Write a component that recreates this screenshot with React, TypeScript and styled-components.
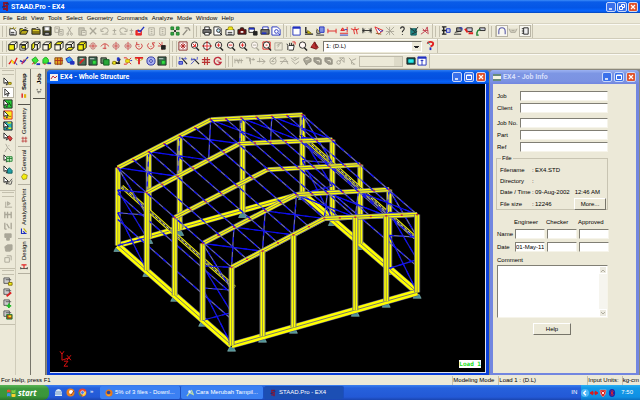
import React from 'react';
import styled, { createGlobalStyle, css } from 'styled-components';

const beige = '#ece9d8';
const shade = '#aca899';

const Global = createGlobalStyle`
  * { box-sizing: border-box; }
  html, body { margin: 0; padding: 0; }
  body, button, input, select, textarea {
    font-family: "Liberation Sans", Arial, sans-serif;
    font-size: 6px;
    line-height: 9px;
    color: #000;
  }
  button, input, select, textarea { margin: 0; padding: 0; border-radius: 0; }
`;

/* ---------- icons ---------- */

type Part = [d: string, stroke: string, fill?: string, width?: number];

const K = '#222';
const G = '#aaa798';
const R = '#e02020';
const Y = '#f4ee10';
const B = '#2030c0';
const T = '#208030';

const front = 'M1 4h6v6h-6z';
const top = 'M1 4l3-3h6l-3 3z';
const side = 'M7 4l3-3v6l-3 3z';
const cube = (...faces: string[]): Part[] => [
  [front + top + side, K, '#fbf8e8'],
  ...faces.map((f): Part => [f, K, Y]),
];
const zoomGlass = (inner: string, c = R, ring = K): Part[] => [
  ['M1.5 4.5a3.5 3.5 0 1 0 7 0a3.5 3.5 0 1 0 -7 0z', ring, '#fff8f4'],
  ['M7 7.5l3 3', ring, '', 1.5],
  [inner, c],
];
const plus = 'M3 4.5h4M5 2.5v4';
const arrow = 'M2 1v7l2-2l1 3l1-1l-1-2h2z';
const pointer = (extra: Part[]): Part[] => [['M1 1v6l2-1l1 3l1-1l-1-2h2z', K, '#fff'], ...extra];
const greyNode = (d: string): Part[] => [[d, G]];

const icons: Record<string, Part[]> = {
  c1: cube(front),
  c2: [...cube(), ['M3 5h4v3h-4z', K, Y]],
  c3: [...cube(), ['M1 4l3-3v6l-3 3z', K, Y]],
  c4: cube(side),
  c5: cube(top),
  c6: [...cube(), ['M1 10l3-3h6l-3 3z', K, Y]],
  c7: cube(front, top, side),
  newFile: [['M2 3h4l3 3v4h-7z', K, '#fff'], ['M2 2l2 1M6 1v2M9 2l-2 1', '#a09010'], ['M3 7h4M3 9h4', K]],
  open: [['M1 9v-6h3l1 1h3v2', K, Y], ['M1 9l2-4h7l-2 4z', K, '#b8a818'], ['M6 2q2-1 3 1', K]],
  folder: [['M1 9v-6h4l1 1h4v5z', K, '#8a7a14'], ['M2 5h7', '#e8d830'], ['M6 2q2-1 3 1', K]],
  save: [['M1 1h9v9h-9z', K, '#4a4a20'], ['M3 1h5v4h-5z', '#888', '#fff'], ['M3 7h5v3h-5z', K, '#aaa']],
  copy: [['M1 1h5v6h-5zM5 4h5v6h-5z', G], ['M2 3h3M6 6h3M6 8h3', G]],
  cut: [['M3 1l4 7M7 1l-4 7M3 8a1 1 0 1 0 .1 0M7 8a1 1 0 1 0 .1 0', G]],
  paste: [['M2 2h6v8h-6z', G, '#c8c5b4'], ['M5 5h5v5h-5z', G, beige], ['M6 7h3', G]],
  del: [['M2 2l7 7M9 2l-7 7', G, '', 1.5]],
  undo: [['M2 5a3.5 3 0 0 1 7 0q0 3-3 3M1 3v3h3M2 9h7', G]],
  redo: [['M9 5a3.5 3 0 0 0-7 0q0 3 3 3M10 3v3h-3M2 9h7', G]],
  more: [['M4 5h4M6 3v5M4 9h4', G]],
  check: [['M1 5h6v5h-6z', R, '#f03030'], ['M3 4l2 3l5-6', B, '', 1.5], ['M3 7h3', '#fff']],
  pageGrey: [['M2 2h6v8h-6z', G], ['M4 4h2M4 6h2M4 8h2', G]],
  tiles: [['M1 1h3v3h-3zM7 1h3v3h-3zM1 7h3v3h-3zM7 7h3v3h-3z', T, '#30a840'], ['M4 4l3 3M7 4l-3 3', K]],
  hammer: [['M2 10l5-6M4 2h4l2 3', '#8f8c80', '', 1.5]],
  print: [['M3 4v-3h5v3', K, '#fff'], ['M1 4h9v4h-9z', K, '#777'], ['M3 7h5v3h-5z', K, '#fff']],
  preview: [['M1 1h6l2 2v7h-8z', K, '#fff'], ['M4 5a2 2 0 1 0 4 0a2 2 0 1 0-4 0M7 7l3 3', K, '#b8dff0']],
  report: [['M1 4h9v6h-9z', K, '#fff'], ['M3 4l1-3h4l1 3', '#a09010', Y], ['M3 7h5M3 9h5', K]],
  camera: [['M1 4h2l1-2h3l1 2h2v5h-9z', K, '#6a1010'], ['M4 6.5h3', '#eee', '', 2]],
  movie: [['M1 2h6v5h-6z', K, '#fff'], ['M1 3h6', B, '', 2], ['M6 6h4v4h-4z', K, K]],
  printBlue: [['M3 4v-3h6v3', B, '#fff'], ['M1 4h9v5h-9z', K, '#777'], ['M2 8h5', B, '', 2]],
  pageBlue: [['M1 1h6l3 3v6h-9z', B, '#fff'], ['M4 6a2 2 0 1 0 4 0a2 2 0 1 0-4 0M8 8l2 2', B]],
  win: [['M1 1h8v9h-8z', B, '#fff'], ['M1 2h8', B, '', 2]],
  lab: [['M2 1v6h4M1 9h9', K, '', 1.5], ['M4 5l4 3h-4z', '#807010', Y]],
  labBlue: [['M2 4v4h4M1 10h9', K], ['M5 1h5v6h-5z', B, '#8090e0'], ['M2 3l3 4', '#807010', Y]],
  dimRed: [['M1 3v5M10 3v5M1 5.5h9', R]],
  loadRed: [['M1 8h9M4 2l2 3h-4zM9 1v6', R, '#f06060'], ['M1 10h9M6 4h3', B]],
  fork: [['M1 3l3 1l1 5M10 3l-3 1l1 5M4 4h4M5.5 4v-3', R]],
  dim: [['M1 2v6M10 2v6M1 5h9M3 3l-2 2l2 2M8 3l2 2l-2 2', K]],
  tagRed: [['M1 1l4 8l5-4z', R, '#fff'], ['M4 3l3 3l3-1', B], ['M2 8l6 1', '#806020']],
  crossGrey: [['M1 1l9 9M10 1l-9 9M1 6h9M5 1v9', G]],
  ask: [['M4 3q0-2 2-2t2 2q0 1-2 3v1M6 9v1', K, '', 1.2]],
  brush: [['M2 3h6v7h-6z', '#106060', '#208888'], ['M1 2l5 4l4-5M3 9l6-3', K]],
  aRed: [['M1 9q5-2 7-8l1 8M3 5h6M3 3l5 5', '#c04050']],
  beam1: [['M1 1h5M1 9h5M3 1v8M1 5h9', K, '', 1.5], ['M6 3h4v4h-4z', B, '#ccd']],
  beam2: [['M4 2h5v4h-5zM1 9h8M2 7l5-1', K, '#999'], ['M7 2h3v3', B]],
  beam3: [['M3 2h6v4h-6z', K, '#ccd'], ['M1 3l3 4M5 8h5', R, '', 2]],
  beam4: [['M4 2h6v3h-6z', K, '#ccd'], ['M1 9q0-5 4-5M1 7v3h2', T, '', 1.5]],
  arch: [['M2 9v-3q0-4 3.5-4t3.5 4v3', '#5a5aa8', '', 1.2]],
  cup: [['M1 3l2 4h5l2-4M4 5h3', G, '#d4d1c0']],
  frame: [['M4 2h5v7h-5z', K, '#eee'], ['M2 3h2M2 5.5h2M2 8h2', K]],
  rotH: [['M1 5.5h9M5.5 3v5', '#d04040'], ['M3 5a2.5 3 0 0 1 5 0M3 6a2.5 3 0 0 0 5 0', '#c07070']],
  rotH2: [['M1 6q4-6 9 0M3 8h4M5.5 3v6', '#d04040']],
  rotV: [['M5.5 1v9M3 5.5h5', '#d04040'], ['M5 3a3 2.5 0 0 0 0 5M6 3a3 2.5 0 0 1 0 5', '#c07070']],
  rotL: [['M3 3a3.5 3.5 0 1 0 5 0M3 1v3h3M5 6h1', '#d04040']],
  rotR: [['M8 3a3.5 3.5 0 1 1-5-.5M8 5l-1-3h3M5 6h1', '#d04040']],
  target: [['M5.5 1v9M1 5.5h9M2 2l7 7', '#d04040'], ['M5 5h4v4h-4z', K, K]],
  fit: [['M1 1h9v9h-9z', '#802020', '#fff'], ['M3 3l5 5M8 3l-5 5M5.5 2v7M2 5.5h7', '#b02020']],
  zoomPlus: zoomGlass(plus),
  zoomMinus: zoomGlass('M3 4.5h4'),
  zoomArrow: zoomGlass('M3 3l3 3M6 3v3h-3'),
  zoomCross: [['M1.5 5.5a4 4 0 1 0 8 0a4 4 0 1 0-8 0z', K, '#fff'], ['M0 5.5h11M5.5 0v11', R]],
  zoomBox: [['M1 1h8v8h-8z', R], ...zoomGlass('M4 4.5h2')],
  zoomGrey: zoomGlass('M3 4.5h4', G, G),
  boxGrey: [['M1 2h8v8h-8z', G], ['M3 5l5-3M4 7l2-3', G]],
  hand: [['M2 10v-5l-1-2M4 5v-3M6 5v-3M8 5v-2M3 10h5l1-5h-6', K, '#fff'], ['M7 1h3v3', R]],
  glass: zoomGlass('M4 3h1', '#fff'),
  pyramid: [['M1 7l4-6l2 6z', '#701818', '#d8a0a0'], ['M5 1l4 6l-2 2l-6-2M5 1l2 6', '#701818', '#b83030']],
  helpRed: [['M3 3q0-2 3-2t3 2q0 2-3 3', R, '', 2], ['M6 7v3', B, '', 2], ['M3 1l2 3', '#20a0a0']],
  nodeRed: [['M1 9l3-4l3 3l3-6', R, '', 1.5], ['M4 5l2 3', Y, '', 2], ['M8 7l2 3', B]],
  nodeBlue: [['M1 5l4 2l5-6', B, '', 1.5], ['M3 9l3-5', '#c83060', '', 1.5], ['M7 3l2 2', Y]],
  plateG: [['M1 4l4-3l3 4l-4 4z', '#20a020', '#38e838'], ['M1 9l3-2', R], ['M6 9h4', B, '', 2]],
  plateG2: [['M1 4q3-5 6 0v4h-6z', '#20a020', '#38e838'], ['M6 8h4', B, '', 2], ['M2 9h2', R]],
  mesh: [['M1 2h8v7h-8z', '#804010', '#e8b020'], ['M1 5h9M4 2v8M7 2v8', '#b03020']],
  solid: [['M1 3l4-2l3 3v4l-5-1z', B, '#30a0e8'], ['M6 6h4v3h-4z', B, B]],
  boxR: [['M1 1h9v9h-9z', K, '#467058'], ['M3 8l5-5', R, '', 2], ['M3 3h4', '#ddd']],
  boxG: [['M1 1h9v9h-9z', K, '#38664c'], ['M5 5h4v4h-4z', T, '#30e040'], ['M2 3h5', '#ddd']],
  boxG2: [['M1 2h6v6h-6z', K, '#6a8a6a'], ['M4 4h6v6h-6z', '#106020', '#28a838']],
  spread: [['M1 8h9M3 6l5 2l2-5', K, '', 1.5], ['M2 6h3v3h-3z', '#a09010', Y], ['M7 2h2v3h-2z', B, B]],
  fan: [['M1 2h3l2 3l3-3M1 9h3l2-3l3 3', R], ['M3 4h4v3h-4z', '#c0a010', Y], ['M8 5h2', B]],
  tee: [['M1 2h9M5.5 2v7', R, '', 2], ['M1 3l3 2M10 3l-3 2', '#c0a010']],
  wheel: [['M1 5.5a4.5 4.5 0 1 0 9 0a4.5 4.5 0 1 0-9 0', '#2830a0', '#a8b0f0'], ['M4 5.5a1.5 1.5 0 1 0 3 0a1.5 1.5 0 1 0-3 0', '#2830a0', '#fff']],
  wandBox: [['M4 2l6 7', K, '', 1.2], ['M1 6h4v3h-4z', B, '#8088e0'], ['M2 1v3M8 1v3M5 3h5', '#6068d0']],
  wand: [['M4 3l6 6', K, '', 1.2], ['M1 9l4-4M2 2v3M8 1v3M1 4h6', '#4850c8']],
  hash: [['M1 4h9M1 7h9M4 1v9M7 1v9', '#b83030', '', 1.2]],
  ring: [['M9 4a4 4 0 1 0 0 3h-3', '#c03040', '', 1.5], ['M4 5.5h3', '#c03040']],
  g1: greyNode('M1 3v5M3 3l2 5l1-5M8 3v5M1 5h9'),
  g2: greyNode('M1 2h4v4M6 2v7M9 2v3M7 4h4'),
  g3: greyNode('M1 6h9M6 3l4 3l-3 3M4 2v5'),
  g4: greyNode('M2 5.5a3.5 3.5 0 1 0 7 0a3.5 3.5 0 1 0-7 0M4 6l5-5M4 6h3'),
  g5: greyNode('M1 2h6M2 9l5-6l3 6M1 6h9'),
  g6: greyNode('M1 2l4 3l5-3M2 5l4 4l4-3M4 2h3'),
  blob: [['M2 3l4-2l4 2v3l-4 2l-1 2l-3-5z', '#8e8b7e', '#aaa798'], ['M4 4l4-1', beige]],
  blob2: [['M1 2h6l2 2v5h-4l-4-3z', '#8e8b7e', '#a09d90'], ['M4 5h3v2', beige]],
  g9: greyNode('M2 7a2 2 0 1 0 4 0a2 2 0 1 0-4 0M5 6l4-4M5 2h5v5z'),
  g10: greyNode('M2 2l3 3l5-2M4 5l4 4M6 9h3M5 6v3'),
  screen: [['M1 2h9v7h-9z', K, '#105050'], ['M3 4h5v3h-5z', '#20d0d0', '#30f0f0']],
  pageUp: [['M1 1h9v9h-9z', B, '#fff'], ['M1 2h9', B, '', 2], ['M5.5 4v6M4 5h3', B]],
  ptrNode: pointer([['M6 6h3v2h-3z', '#807010', Y]]),
  ptr: [[arrow, K, '#fff']],
  ptrG: [['M1 1h9v9h-9z', K, '#28d038'], ...pointer([['M6 3l3 5', '#104010']])],
  ptrY: [['M1 1h9v9h-9z', R, '#f8f020'], ...pointer([['M6 7h3', '#a06010']])],
  ptrB: [['M1 1h9v9h-9z', K, '#28b0b8'], ...pointer([['M5 2h4M6 8h3', Y, '', 1.5]])],
  ptrR: pointer([['M5 6l2-2l3 3l-2 3z', '#801818', '#e04040']]),
  ptrGrey: greyNode('M3 1l2 4l-3 5M5 5l4 4M6 3h1'),
  ptrT: pointer([['M4 3h6v5h-6z', T, '#c8f0c8'], ['M7 3v6M4 5h6', T]]),
  ptrC: pointer([['M5 5l2-2l3 3v3h-5z', '#106060', '#20a0a8']]),
  ptrPen: pointer([['M5 9l5-6M6 9h3l1-4', '#555']]),
  v1: [['M2 9h8M3 3v6M5 3l3 2l-3 2z', G, '#c4c1b0']],
  v2: [['M2 2v7M9 2v7M2 5h7M5 2v7', G, '', 1.5]],
  v3: [['M2 2v7M9 2v7M4 3l3 5M2 9h2', G, '', 1.5]],
  v4: [['M2 2h7v4h-2v3h-3v-3h-2z', G, G]],
  v5: [['M2 4l3-2h5v5l-2 2h-5z', G, G]],
  v6: [['M2 4h5v5h-5zM4 2h5v5', G]],
  sY: [['M1 1h6v6h-6zM3 3h6', '#555', '#ccc'], ['M6 6h4v3h-4z', '#807010', Y]],
  sR: [['M1 1h6v6h-6zM3 3h6', '#555', '#ccc'], ['M4 9l5-4', R, '', 2]],
  sG: [['M1 1h6v6h-6zM3 3h6', '#555', '#ccc'], ['M4 7.5h5M6.5 5v5', '#20b828', '', 2]],
  sM: [['M1 1h6v6h-6zM3 3h6', '#555', '#ccc'], ['M4 5h6v5h-6z', T, '#b04020'], ['M6 7h3', Y, '', 2]],
  tabSetup: [['M3 2v6', R, '', 2], ['M7 3v5', '#e0b010', '', 3]],
  tabGeo: [['M2 3h8M2 7h8M4 1v8M8 1v8', '#b83030']],
  tabGen: [['M2 5l3-4l5 2l-1 5l-5 1z', '#908010', Y]],
  tabAna: [['M2 2v7h7M4 6l3 2', B, '', 1.5], ['M5 2l4 5', '#c0b010', '', 1.5]],
  tabDes: [['M2 4h7M5.5 4v5', R, '', 1.5], ['M1 7v3M10 7v3M1 9h9', K]],
  tabJob: [['M3 8h5M5 9v1M3 4v2M8 4v2', K]],
};

const IconSvg = styled.svg`
  display: block;
  width: 10px;
  height: 10px;
  flex: none;
`;

const Icon = ({ name }: { name: string }) => (
  <IconSvg viewBox="0 0 11 11" aria-hidden="true">
    {icons[name].map(([d, stroke, fill, width], i) => (
      <path key={i} d={d} stroke={stroke} fill={fill || 'none'} strokeWidth={width ?? 1} />
    ))}
  </IconSvg>
);

/* ---------- shell ---------- */

const Screen = styled.div`
  display: flex;
  flex-direction: column;
  min-height: 100vh;
  background: ${beige};
  overflow: hidden;
`;

const TitleBar = styled.header`
  display: flex;
  align-items: center;
  height: 13px;
  padding: 0 2px 0 1px;
  gap: 1px;
  background: linear-gradient(#3c8cf8 0, #0a5ce8 15%, #0456e6 60%, #0866ff 85%, #0344b8 100%);
`;

const TitleText = styled.h1<{ $dim?: boolean }>`
  flex: 1;
  margin: 0;
  font: bold 7px/10px Roboto, "Liberation Sans", sans-serif;
  color: ${(p) => (p.$dim ? '#d6dffa' : '#fff')};
  white-space: nowrap;
`;

const WinButton = styled.button<{ $close?: boolean }>`
  display: grid;
  place-items: center;
  width: 10px;
  height: 10px;
  border: 1px solid #c8d8fa;
  border-radius: 2px;
  background: ${(p) => (p.$close ? '#e0532c' : '#3a70ea')};
  svg { display: block; width: 6px; height: 6px; }
`;

const WindowButtons = ({ restore }: { restore?: boolean }) => (
  <>
    <WinButton aria-label="Minimize"><svg viewBox="0 0 6 6"><path d="M1 5h3" stroke="#fff" strokeWidth="1.5" /></svg></WinButton>
    <WinButton aria-label={restore ? 'Restore' : 'Maximize'}>
      <svg viewBox="0 0 6 6" fill="none" stroke="#fff"><path d={restore ? 'M2.5 2v-1.5h3v3h-1.5M.5 2.5h3v3h-3z' : 'M.5 1h5v4.5h-5zM.5 1.5h5'} /></svg>
    </WinButton>
    <WinButton $close aria-label="Close"><svg viewBox="0 0 6 6"><path d="M1 1l4 4M5 1l-4 4" stroke="#fff" strokeWidth="1.2" /></svg></WinButton>
  </>
);

const MenuBar = styled.nav`
  display: flex;
  align-items: center;
  gap: 4px;
  height: 11px;
  padding: 0 3px;
  border-bottom: 1px solid #d8d4c2;
`;

const MenuItem = styled.button`
  border: 0;
  background: none;
  white-space: nowrap;
`;

const ToolRow = styled.div`
  display: flex;
  height: 15px;
  border-bottom: 1px solid #d0ccba;
  box-shadow: inset 0 1px #fbfaf4;
`;

const gripLines = css`
  content: '';
  flex: none;
  border: solid #c4c0ae;
`;

const ToolBar = styled.div<{ $w: number }>`
  display: flex;
  align-items: center;
  width: ${(p) => p.$w}px;
  padding-right: 1px;
  border-right: 1px solid #c4c0ae;
  &::before { ${gripLines} width: 3px; height: 11px; margin: 0 0 0 2px; border-width: 0 1px; }
`;

const ToolButton = styled.button<{ $on?: boolean; $narrow?: boolean }>`
  flex: ${(p) => (p.$narrow ? 6 : 11)} 1 0;
  min-width: 0;
  height: 12px;
  display: grid;
  place-items: center;
  place-content: center;
  overflow: hidden;
  border: ${(p) => (p.$on ? '1px solid #b8b4a4' : 0)};
  background: ${(p) => (p.$on ? '#f8f7f0' : 'none')};
`;

const Combo = styled.select<{ $w: number }>`
  appearance: none;
  width: ${(p) => p.$w}px;
  height: 11px;
  margin: 0 2px;
  padding: 0 0 0 2px;
  border: 1px solid;
  border-color: #77756a #fff #fff #77756a;
  background:
    linear-gradient(#222, #222) right 2px top 4px / 5px 1px no-repeat,
    linear-gradient(#222, #222) right 3px top 5px / 3px 1px no-repeat,
    linear-gradient(${beige}, ${beige}) right / 9px 100% no-repeat,
    #fff;
  &:disabled {
    background: linear-gradient(#d8d4c2, #d8d4c2) right / 8px 100% no-repeat, ${beige};
    border-color: ${shade};
  }
`;

const Tools = ({ names, on = [] }: { names: string; on?: string[] }) => (
  <>
    {names.split(' ').map((n, i) => (
      <ToolButton key={i} $on={on.includes(n)} $narrow={n === 'more'} aria-label={n}>
        <Icon name={n} />
      </ToolButton>
    ))}
  </>
);

const Workspace = styled.main`
  flex: 1;
  display: flex;
  min-height: 0;
`;

const SideTools = styled.div`
  width: 16px;
  flex: none;
  border-right: 1px solid #d0ccba;
`;

const SideBar = styled.div`
  display: flex;
  flex-direction: column;
  align-items: center;
  padding-bottom: 4px;
  border-bottom: 1px solid #c4c0ae;
  &::before { ${gripLines} width: 12px; height: 3px; margin: 1px 0; border-width: 1px 0; }
`;

const SideButton = styled.button<{ $on?: boolean }>`
  display: grid;
  place-items: center;
  width: 12px;
  height: 11px;
  border: ${(p) => (p.$on ? '1px solid #b8b4a4' : 0)};
  background: ${(p) => (p.$on ? '#fff' : 'none')};
`;

const TabStrip = styled.div`
  display: flex;
  flex-direction: column;
  flex: none;
  width: 15px;
  padding: 1px 0 0 2px;
  border-right: 1px solid #77756a;
`;

const Tab = styled.button<{ $h: number; $on?: boolean }>`
  writing-mode: vertical-rl;
  transform: rotate(180deg);
  display: flex;
  align-items: center;
  justify-content: center;
  gap: 2px;
  width: 12px;
  height: ${(p) => p.$h}px;
  border: 0 solid ${(p) => (p.$on ? '#55534a' : '#b4b0a0')};
  border-top-width: 1px;
  background: ${beige};
  font-weight: ${(p) => (p.$on ? 'bold' : 'normal')};
  white-space: nowrap;
  svg { transform: rotate(180deg); width: 8px; height: 8px; }
`;

const Mdi = styled.div`
  flex: 1;
  min-width: 0;
  display: flex;
  gap: 1px;
  padding: 1px 1px 0 1px;
  background: #8b887c;
`;

const Window = styled.section<{ $dim?: boolean }>`
  display: flex;
  flex-direction: column;
  min-width: 0;
  flex: ${(p) => (p.$dim ? '0 0 149px' : '1 1 0')};
  padding: 0 3px 2px;
  border-radius: 4px 4px 0 0;
  background: ${(p) => (p.$dim ? '#7286e0' : '#0a3fd8')};
`;

const WindowTitle = styled.div<{ $dim?: boolean }>`
  display: flex;
  align-items: center;
  gap: 2px;
  height: 14px;
  margin: 0 -3px;
  padding: 0 3px;
  border-radius: 4px 4px 0 0;
  background: ${(p) =>
    p.$dim
      ? 'linear-gradient(#9cb2f2 0, #7d96e4 25%, #7b92e2 80%, #7286e0 100%)'
      : 'linear-gradient(#2c7cf4 0, #0556e4 20%, #0450e0 60%, #0763fb 85%, #0344c0 100%)'};
`;

const Canvas = styled.div`
  flex: 1;
  min-height: 0;
  position: relative;
  background: #000;
  border: solid #dfe3ee;
  border-width: 0 1px 1px 0;
  svg { display: block; width: 100%; height: 100%; }
`;

const LoadTag = styled.span`
  position: absolute;
  right: 4px;
  bottom: 4px;
  background: #fff;
  color: #18e018;
  font: bold 6px/8px "DejaVu Sans Mono", "Liberation Mono", monospace;
`;

/* ---------- structure drawing ---------- */

type Pt = [number, number];
const lerp = (a: Pt, b: Pt, t: number): Pt => [a[0] + (b[0] - a[0]) * t, a[1] + (b[1] - a[1]) * t];

const frames: { le: Pt; rg: Pt; re: Pt; lb: Pt; rb: Pt }[] = [
  { le: [118, 167], rg: [211, 119], re: [303, 114], lb: [118, 245], rb: [303, 193] },
  { le: [147, 192], rg: [240, 143], re: [333, 139], lb: [147, 270], rb: [333, 219] },
  { le: [175, 217], rg: [268, 169], re: [361, 164], lb: [175, 295], rb: [361, 243] },
  { le: [203, 243], rg: [297, 194], re: [390, 189], lb: [203, 320], rb: [390, 268] },
  { le: [232, 267], rg: [325, 218], re: [418, 214], lb: [232, 345], rb: [418, 292] },
];

const roofNodes = frames.map((f) => [
  ...[0, 1, 2, 3, 4, 5].map((i) => lerp(f.le, f.rg, i / 6)),
  ...[0, 1, 2, 3, 4, 5, 6].map((i) => lerp(f.rg, f.re, i / 6)),
]);

const line = (a: Pt, b: Pt) => `M${a[0]} ${a[1]}L${b[0]} ${b[1]}`;

const Beam = ({ a, b, w }: { a: Pt; b: Pt; w: number }) => {
  const d = line(a, b);
  return (
    <g fill="none">
      <path d={d} stroke="#4c4c88" strokeWidth={w + 1} />
      <path d={d} stroke="#ffff00" strokeWidth={w} />
      <path d={d} stroke="#77776c" strokeWidth="1" />
    </g>
  );
};

const Column = ({ a, b }: { a: Pt; b: Pt }) => {
  const h = b[1] - a[1];
  return (
    <g>
      <rect x={a[0] - 3} y={a[1]} width="6" height={h} fill="#74747c" />
      <rect x={a[0] - 2} y={a[1]} width="4" height={h} fill="#ffff00" />
      <rect x={a[0] - 0.5} y={a[1]} width="1" height={h} fill="#a0a040" />
    </g>
  );
};

const Rafter = ({ a, b }: { a: Pt; b: Pt }) => (
  <g fill="none">
    <path d={line(a, b)} stroke="#7c7c86" strokeWidth="5" />
    <path d={line(a, b)} stroke="#ffff00" strokeWidth="3.5" />
    <path d={line(a, b)} stroke="#86866c" strokeWidth="1" />
  </g>
);

const CraneBeam = ({ a, b }: { a: Pt; b: Pt }) => (
  <g fill="none">
    <path d={line(a, b)} stroke="#f4f400" strokeWidth="4" />
    <path d={line(a, b)} stroke="#30304c" strokeWidth="2" />
    <path d={line(a, b)} stroke="#e8e890" strokeWidth="1" strokeDasharray="3 2" />
  </g>
);

const Brace = ({ a, b, c = '#1212e8' }: { a: Pt; b: Pt; c?: string }) => (
  <>
    <path d={line(a, b)} stroke={c} strokeWidth="1.2" />
    <path d={line(a, b)} stroke="#0c0cf4" strokeWidth="1.2" strokeDasharray="5 5" />
  </>
);

const Support = ({ p }: { p: Pt }) => (
  <path d={`M${p[0] - 2} ${p[1] + 2}h4l2 4h-8z`} fill="#4c8f92" stroke="#9fd0d0" strokeWidth=".5" />
);

const purlin = '#6c6cb4';
const frontCols: [Pt, Pt][] = [
  [[263, 251], [263, 336]],
  [[294, 235], [294, 327]],
  [[356, 217], [356, 310]],
  [[387, 216], [387, 301]],
];
const backCols: [Pt, Pt][] = [
  [[149, 151], [149, 237]],
  [[180, 135], [180, 229]],
  [[243, 117], [243, 211]],
];

const wall = (topA: Pt, botA: Pt, topB: Pt, botB: Pt): [Pt, Pt][] => {
  const A = [0, 0.29, 0.58, 1].map((t) => lerp(topA, botA, t));
  const Z = [0, 0.29, 0.58, 1].map((t) => lerp(topB, botB, t));
  return [[A[0], Z[1]], [A[1], Z[0]], [A[1], Z[2]], [A[2], Z[1]], [A[2], Z[3]], [A[3], Z[2]]];
};

const Structure = () => {
  const [f0, f1, f2, f3, f4] = frames;
  const walls = [
    ...wall(f0.le, f0.lb, f1.le, f1.lb),
    ...wall(f3.le, f3.lb, f4.le, f4.lb),
    ...wall(f0.re, f0.rb, f1.re, f1.rb),
    ...wall(f3.re, f3.rb, f4.re, f4.rb),
  ];
  const roofBraces: [Pt, Pt][] = [];
  [0, 3].forEach((k) => {
    for (let i = 0; i < 12; i += 2) {
      roofBraces.push([roofNodes[k][i], roofNodes[k + 1][i + 2]]);
      roofBraces.push([roofNodes[k][i + 2], roofNodes[k + 1][i]]);
    }
  });
  const bases = [
    ...frames.map((f) => f.lb),
    ...frames.map((f) => f.rb),
    ...frontCols.map((c) => c[1]),
    ...backCols.map((c) => c[1]),
  ];
  return (
    <svg viewBox="50 84 436 287" role="img" aria-label="Whole structure, isometric view">
      {bases.map((p, i) => <Support key={i} p={p} />)}
      <Beam a={f0.lb} b={f0.rb} w={5} />
      {backCols.map(([a, b], i) => <Column key={i} a={a} b={b} />)}
      <Beam a={f0.rb} b={f4.rb} w={6} />
      {[f0, f1, f2, f3].map((f, i) => <Column key={i} a={f.re} b={f.rb} />)}
      <Column a={f0.le} b={f0.lb} />
      <Beam a={f0.lb} b={f4.lb} w={6} />
      <CraneBeam a={[122, 186]} b={[235, 287]} />
      <CraneBeam a={[301, 134]} b={[416, 237]} />
      {[1 / 3, 2 / 3].map((t) => (
        <g key={t}>
          <Brace a={lerp(f0.le, f0.lb, t)} b={lerp(f4.le, f4.lb, t)} c={purlin} />
          <Brace a={lerp(f0.re, f0.rb, t)} b={lerp(f4.re, f4.rb, t)} c={purlin} />
        </g>
      ))}
      {walls.map(([a, b], i) => <Brace key={i} a={a} b={b} c={i % 3 ? '#2020d0' : purlin} />)}
      {[f1, f2, f3].map((f, i) => <Column key={i} a={f.le} b={f.lb} />)}
      {roofBraces.map(([a, b], i) => <Brace key={i} a={a} b={b} c={i % 2 ? purlin : '#1010f0'} />)}
      {frames.map((f, i) => (
        <g key={i}>
          <Rafter a={f.le} b={f.rg} />
          <Rafter a={f.rg} b={f.re} />
        </g>
      ))}
      {roofNodes[0].map((n, i) => <Brace key={i} a={n} b={roofNodes[4][i]} c={purlin} />)}
      <Rafter a={f4.le} b={f4.rg} />
      <Rafter a={f4.rg} b={f4.re} />
      <Beam a={f4.lb} b={f4.rb} w={6} />
      {frontCols.map(([a, b], i) => <Column key={i} a={a} b={b} />)}
      <Column a={f4.le} b={f4.lb} />
      <Column a={f4.re} b={f4.rb} />
      {roofNodes.flat().map((n, i) => (
        <path key={i} d={`M${n[0] - 1} ${n[1]}h2`} stroke="#c01848" strokeWidth="1.5" />
      ))}
      <path d="M60 351l2 3l2-3M62 354v6l6-2M67 355l4 5M71 355l-4 5M64 361h4l-4 5h4" stroke="#d81010" fill="none" />
    </svg>
  );
};

/* ---------- job info ---------- */

const JobForm = styled.form`
  flex: 1;
  display: flex;
  flex-direction: column;
  padding: 7px 28px 0 3px;
  background: ${beige};
`;

const Fields = styled.div`
  display: grid;
  grid-template-columns: 23px 1fr;
  grid-auto-rows: 10px;
  row-gap: 2px;
  margin: 0 0 5px 1px;
  align-items: center;
  white-space: nowrap;
`;

const sunken = css`
  border: 1px solid;
  border-color: #807e74 #f6f4ea #f6f4ea #807e74;
  background: #fff;
`;

const Field = styled.input`
  ${sunken}
  display: block;
  width: 100%;
  height: 10px;
  min-width: 0;
  line-height: 8px;
`;

const FileBox = styled.fieldset`
  margin: -3px 0 0;
  padding: 2px 1px 0 3px;
  border: 1px solid #c8c4b2;
  min-width: 0;
  legend { padding: 0 1px; margin-left: 1px; }
`;

const FileRow = styled.div`
  display: grid;
  grid-template-columns: 32px 3px 1fr auto;
  align-items: center;
  height: 11px;
  white-space: nowrap;
`;

const Time = styled.span`
  margin-right: 6px;
`;

const PushButton = styled.button<{ $w: number; $center?: boolean }>`
  align-self: ${(p) => (p.$center ? 'center' : 'auto')};
  width: ${(p) => p.$w}px;
  height: 12px;
  border: 1px solid;
  border-color: #fff #77756a #77756a #fff;
  background: ${beige};
`;

const SignTable = styled.table`
  margin: 8px 0 0 1px;
  border-collapse: separate;
  border-spacing: 0;
  table-layout: fixed;
  width: 112px;
  th { font-weight: normal; text-align: left; padding: 0; height: 10px; }
  th:first-child { width: 16px; }
  td { padding: 1px 0 2px 2px; }
  thead th { padding: 0 0 1px 1px; white-space: nowrap; }
`;

const CommentFrame = styled.div`
  ${sunken}
  display: flex;
  height: 53px;
  margin: 0 0 5px 1px;
`;

const CommentBox = styled.textarea`
  flex: 1;
  min-width: 0;
  border: 0;
  resize: none;
  background: none;
`;

const ScrollRail = styled.div`
  display: flex;
  flex-direction: column;
  justify-content: space-between;
  width: 8px;
  background: #f6f5ef;
`;

const ScrollButton = styled.button`
  display: grid;
  place-items: center;
  height: 8px;
  border: 1px solid #fff;
  background: #eceae0;
  svg { display: block; width: 4px; height: 3px; }
`;

const CommentLabel = styled.label`
  margin: 2px 0 0 1px;
`;

/* ---------- bottom ---------- */

const StatusBar = styled.footer`
  display: flex;
  align-items: center;
  gap: 3px;
  height: 10px;
  padding: 0 1px;
  white-space: nowrap;
`;

const StatusCell = styled.span<{ $w?: number }>`
  flex: ${(p) => (p.$w ? `0 0 ${p.$w}px` : '1')};
  border-left: ${(p) => (p.$w ? '1px solid #c4c0ae' : 0)};
`;

const TaskBar = styled.div`
  display: flex;
  align-items: center;
  height: 15px;
  background: linear-gradient(#3a80f0 0, #2661dc 20%, #2359d6 80%, #1a45b0 100%);
  color: #fff;
`;

const Start = styled.button`
  display: flex;
  align-items: center;
  gap: 2px;
  width: 49px;
  height: 15px;
  padding-left: 6px;
  border: 0;
  border-radius: 0 6px 6px 0;
  background: linear-gradient(#5ab456 0, #3c983c 25%, #3a963a 75%, #2a742c 100%);
  color: #fff;
  font: italic bold 8px/12px "Open Sans", "Liberation Sans", sans-serif;
`;

const Quick = styled.div`
  display: flex;
  gap: 3px;
  width: 51px;
  padding-left: 5px;
  svg { display: block; width: 9px; height: 9px; }
  span { line-height: 6px; }
`;

const Task = styled.button<{ $on?: boolean }>`
  display: flex;
  align-items: center;
  gap: 2px;
  flex: 0 1 80px;
  height: 13px;
  padding: 0 5px;
  border: solid #1c4fc0;
  border-width: 0 1px 0 0;
  border-radius: 2px;
  background: ${(p) => (p.$on ? '#1c4fb4' : '#3b80f2')};
  color: #fff;
  white-space: nowrap;
  svg { display: block; width: 8px; height: 8px; flex: none; }
`;

const Tray = styled.div`
  display: flex;
  align-items: center;
  gap: 4px;
  height: 15px;
  margin-left: auto;
`;

const TrayBox = styled.div`
  display: flex;
  align-items: center;
  gap: 1px;
  height: 15px;
  padding-right: 7px;
  background: linear-gradient(#2ab0f4 0, #129ae8 20%, #1090e4 80%, #0c70c0 100%);
  svg { display: block; width: 8px; height: 8px; }
  span { margin-left: 4px; }
`;

const Fox = () => (
  <svg viewBox="0 0 9 9"><circle cx="4.5" cy="4.5" r="4" fill="#e87818" /><circle cx="4" cy="4" r="2" fill="#2848a0" /><path d="M1 3q1 5 6 3q-2 3-5 1z" fill="#f8b030" /></svg>
);
const Logo = () => (
  <svg viewBox="0 0 9 11" width="9" height="11" aria-hidden="true"><path d="M2 2h5M2 5h5M2 8h5M3 1v4M6 5v5" stroke="#801838" strokeWidth="1.8" /><path d="M1 6h3M5 3h3" stroke="#182058" /></svg>
);

const FieldGroup = ({ names }: { names: string[] }) => (
  <Fields>
    {names.map((n) => (
      <React.Fragment key={n}>
        <label htmlFor={n}>{n}</label>
        <Field id={n} />
      </React.Fragment>
    ))}
  </Fields>
);

const SideGroup = ({ names, on }: { names: string; on?: string }) => (
  <SideBar>
    {names.split(' ').map((n, i) => (
      <SideButton key={i} $on={n === on} aria-label={n}><Icon name={n} /></SideButton>
    ))}
  </SideBar>
);

export default function App() {
  return (
    <Screen>
      <Global />
      <TitleBar>
        <Logo />
        <TitleText>STAAD.Pro - EX4</TitleText>
        <WindowButtons restore />
      </TitleBar>
      <MenuBar>
        {['File', 'Edit', 'View', 'Tools', 'Select', 'Geometry', 'Commands', 'Analyze', 'Mode', 'Window', 'Help'].map((m) => (
          <MenuItem key={m}>{m}</MenuItem>
        ))}
      </MenuBar>
      <ToolRow>
        <ToolBar $w={194}><Tools names="newFile open folder save copy cut paste del undo more redo more check pageGrey pageGrey tiles hammer" /></ToolBar>
        <ToolBar $w={90}><Tools names="print preview report camera movie printBlue pageBlue" /></ToolBar>
        <ToolBar $w={149}><Tools names="win lab labBlue dimRed loadRed fork dim tagRed crossGrey ask brush aRed" /></ToolBar>
        <ToolBar $w={56}><Tools names="beam1 beam2 beam3 beam4" /></ToolBar>
        <ToolBar $w={44}><Tools names="arch cup frame" on={['arch', 'frame']} /></ToolBar>
      </ToolRow>
      <ToolRow>
        <ToolBar $w={170}><Tools names="c1 c2 c3 c4 c5 c6 c7 rotH rotH2 rotV rotV rotL rotR target" /></ToolBar>
        <ToolBar $w={268}>
          <Tools names="fit zoomArrow zoomCross zoomPlus zoomMinus zoomPlus zoomGrey zoomBox boxGrey hand glass pyramid" />
          <Combo $w={99} aria-label="Active load"><option>1: (D.L)</option></Combo>
          <Tools names="helpRed" />
        </ToolBar>
      </ToolRow>
      <ToolRow>
        <ToolBar $w={170}><Tools names="nodeRed nodeBlue plateG plateG2 mesh solid boxR boxG boxG2 spread fan tee wheel boxG" /></ToolBar>
        <ToolBar $w={56}><Tools names="wandBox wand hash ring" /></ToolBar>
        <ToolBar $w={204}>
          <Tools names="g1 g2 g3 g4 g5 g6 blob blob2 blob2 g9 g10" />
          <Combo $w={44} disabled aria-label="Mode shape" />
          <Tools names="screen pageUp" />
        </ToolBar>
      </ToolRow>
      <Workspace>
        <SideTools>
          <SideGroup names="ptrNode ptr ptrG ptrY ptrB ptrR ptrGrey ptrT ptrC ptrPen" on="ptr" />
          <SideGroup names="v1 v2 v3 v4 v5 v6" />
          <SideGroup names="sY sR sG sM" />
        </SideTools>
        <TabStrip>
          <Tab $h={35} $on><Icon name="tabSetup" />Setup</Tab>
          <Tab $h={42}><Icon name="tabGeo" />Geometry</Tab>
          <Tab $h={38}><Icon name="tabGen" />General</Tab>
          <Tab $h={54}><Icon name="tabAna" />Analysis/Print</Tab>
          <Tab $h={35}><Icon name="tabDes" />Design</Tab>
        </TabStrip>
        <TabStrip>
          <Tab $h={29} $on><Icon name="tabJob" />Job</Tab>
        </TabStrip>
        <Mdi>
          <Window>
            <WindowTitle>
              <svg width="8" height="7" viewBox="0 0 8 7"><path d="M0 0h8v7h-8z" fill="#eee" /><path d="M1 5l2-3l2 2l2-2" stroke="#c03040" fill="none" /></svg>
              <TitleText>EX4 - Whole Structure</TitleText>
              <WindowButtons />
            </WindowTitle>
            <Canvas>
              <Structure />
              <LoadTag>Load 1</LoadTag>
            </Canvas>
          </Window>
          <Window $dim>
            <WindowTitle $dim>
              <svg width="8" height="7" viewBox="0 0 8 7"><path d="M0 0h8v7h-8z" fill="#f4f4e0" /><path d="M0 1h8M0 6h8" stroke="#386858" strokeWidth="1.5" /></svg>
              <TitleText $dim>EX4 - Job Info</TitleText>
              <WindowButtons />
            </WindowTitle>
            <JobForm>
              <FieldGroup names={['Job', 'Client']} />
              <FieldGroup names={['Job No.', 'Part', 'Ref']} />
              <FileBox>
                <legend>File</legend>
                <FileRow><span>Filename</span><span>:</span><span>EX4.STD</span></FileRow>
                <FileRow><span>Directory</span><span>:</span></FileRow>
                <FileRow><span>Date / Time</span><span>:</span><span>09-Aug-2002</span><Time>12:46 AM</Time></FileRow>
                <FileRow><span>File size</span><span>:</span><span>12246</span><PushButton type="button" $w={32}>More...</PushButton></FileRow>
              </FileBox>
              <SignTable>
                <thead><tr><th /><th>Engineer</th><th>Checker</th><th>Approved</th></tr></thead>
                <tbody>
                  {['Name', 'Date'].map((r) => (
                    <tr key={r}>
                      <th scope="row">{r}</th>
                      {['Engineer', 'Checker', 'Approved'].map((c) => (
                        <td key={c}><Field aria-label={`${c} ${r}`} defaultValue={r === 'Date' && c === 'Engineer' ? '01-May-11' : ''} /></td>
                      ))}
                    </tr>
                  ))}
                </tbody>
              </SignTable>
              <CommentLabel htmlFor="comment">Comment</CommentLabel>
              <CommentFrame>
                <CommentBox id="comment" />
                <ScrollRail>
                  <ScrollButton type="button" aria-label="Scroll up"><svg viewBox="0 0 4 3"><path d="M0 3l2-2l2 2" stroke="#b0ada0" fill="none" /></svg></ScrollButton>
                  <ScrollButton type="button" aria-label="Scroll down"><svg viewBox="0 0 4 3"><path d="M0 0l2 2l2-2" stroke="#b0ada0" fill="none" /></svg></ScrollButton>
                </ScrollRail>
              </CommentFrame>
              <PushButton type="button" $w={38} $center>Help</PushButton>
            </JobForm>
          </Window>
        </Mdi>
      </Workspace>
      <StatusBar>
        <StatusCell>For Help, press F1</StatusCell>
        <StatusCell $w={43}>Modeling Mode</StatusCell>
        <StatusCell $w={86}>Load 1 : (D.L)</StatusCell>
        <StatusCell $w={31}>Input Units:</StatusCell>
        <StatusCell $w={17}>kg-cm</StatusCell>
      </StatusBar>
      <TaskBar>
        <Start>
          <svg width="10" height="10" viewBox="0 0 10 10"><path d="M1 2q2-1 3.5 0v2.5q-2-1-3.5 0z" fill="#f05028" /><path d="M5.5 2q2 1 4-.5v3q-2 1-4 0z" fill="#80d040" /><path d="M1 5.5q2-1 3.5 0v3q-2-1-3.5 0z" fill="#4090f0" /><path d="M5.5 5.5q2 1 4 0v3q-2 1-4 0z" fill="#f8d030" /></svg>
          start
        </Start>
        <Quick>
          <svg viewBox="0 0 9 9"><path d="M1 7q0-6 3.5-6t3.5 6v1h-7z" fill="#d8e8f4" /><path d="M2 4h5M1 6h7" stroke="#7098c8" /></svg>
          <svg viewBox="0 0 9 9"><circle cx="4.5" cy="4.5" r="4" fill="#e88020" /><circle cx="5" cy="4" r="2" fill="#fff" /><path d="M5 7l3-4" stroke="#a04010" /></svg>
          <svg viewBox="0 0 9 9"><circle cx="4.5" cy="4.5" r="4" fill="#e84030" /><path d="M1 3l3 5.5q-4-1-3-5.5z" fill="#38a848" /><path d="M8 3q1 5-4 5.5l2-4z" fill="#f8d030" /><circle cx="4.5" cy="4.5" r="1.8" fill="#4080e8" stroke="#fff" strokeWidth=".6" /></svg>
          <span>»</span>
        </Quick>
        <Task><Fox />5% of 3 files - Downl...</Task>
        <Task><svg viewBox="0 0 9 9"><path d="M1 8l3-4l4 2l-2-5" stroke="#b8d8a8" fill="none" strokeWidth="1.5" /><circle cx="4" cy="3" r="1.5" fill="#e8f0f8" /></svg>Cara Merubah Tampil...</Task>
        <Task $on><Logo />STAAD.Pro - EX4</Task>
        <Tray>
          <span>IN</span>
          <TrayBox>
            <svg viewBox="0 0 9 9"><circle cx="4.5" cy="4.5" r="4.5" fill="#50b8f8" /><path d="M5.5 2l-2.5 2.5l2.5 2.5" stroke="#fff" fill="none" strokeWidth="1.5" /></svg>
            <svg viewBox="0 0 9 9"><path d="M0 4.5l3-2v4zM9 4.5l-3-2v4zM2 4.5h5" fill="#e01818" stroke="#e01818" /></svg>
            <svg viewBox="0 0 9 9"><path d="M1 1h7q0 6-3.5 8q-3.5-2-3.5-8z" fill="#d82020" stroke="#f8b8b0" strokeWidth=".6" /><path d="M3 3l3 3M6 3l-3 3" stroke="#fff" /></svg>
            <svg viewBox="0 0 9 9"><ellipse cx="4.5" cy="4.5" rx="3.5" ry="4.5" fill="#1828a8" /><path d="M3 3l3 3l-1.5 1.5v-6l1.5 1.5l-3 3" stroke="#e02030" fill="none" /></svg>
            <span>7:50</span>
          </TrayBox>
        </Tray>
      </TaskBar>
    </Screen>
  );
}
